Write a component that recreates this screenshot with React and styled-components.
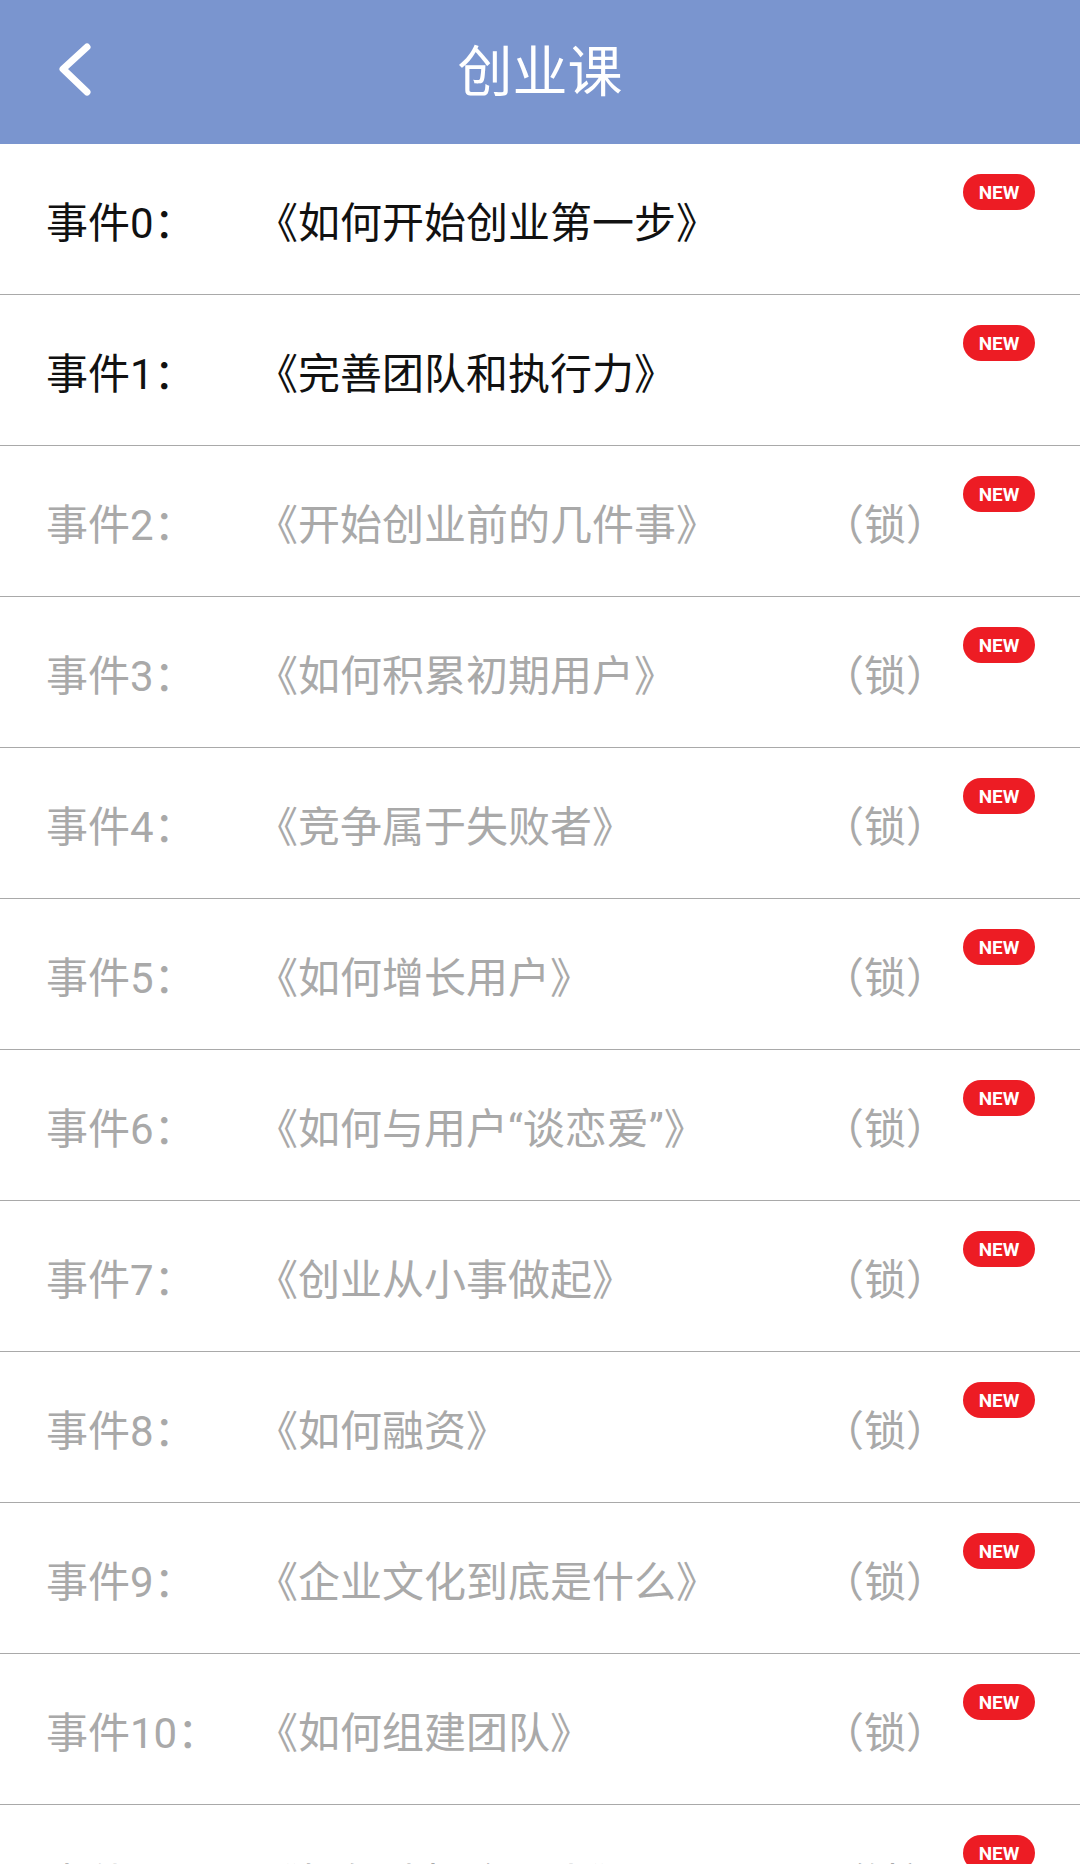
import React from 'react';
import styled, { createGlobalStyle } from 'styled-components';

const lessons = [
    { title: '《如何开始创业第一步》', locked: false },
    { title: '《完善团队和执行力》', locked: false },
    { title: '《开始创业前的几件事》', locked: true },
    { title: '《如何积累初期用户》', locked: true },
    { title: '《竞争属于失败者》', locked: true },
    { title: '《如何增长用户》', locked: true },
    { title: '《如何与用户“谈恋爱”》', locked: true },
    { title: '《创业从小事做起》', locked: true },
    { title: '《如何融资》', locked: true },
    { title: '《企业文化到底是什么》', locked: true },
    { title: '《如何组建团队》', locked: true },
    { title: '《如何选择合伙人》', locked: true },
];

function App() {
    return (
        <>
            <GlobalStyle />
            <Page>
                <Header>
                    <BackButton>
                        <svg width="36" height="58" viewBox="0 0 36 58">
                            <polyline
                                points="31,7 7,29 31,52"
                                fill="none"
                                stroke="#fff"
                                strokeWidth="7"
                                strokeLinecap="round"
                                strokeLinejoin="round"
                            />
                        </svg>
                    </BackButton>
                    <Title>创业课</Title>
                    <div />
                </Header>
                <List>
                    {lessons.map((lesson, i) => (
                        <Row key={i}>
                            <Label $locked={lesson.locked}>事件{i}：</Label>
                            <LessonTitle $locked={lesson.locked}>{lesson.title}</LessonTitle>
                            {lesson.locked && <Lock>（锁）</Lock>}
                            <Badge>NEW</Badge>
                        </Row>
                    ))}
                </List>
            </Page>
        </>
    );
}

const GlobalStyle = createGlobalStyle`
    body {
        margin: 0;
        background: #fff;
        font-family: Roboto, "Noto Sans CJK SC", sans-serif;
    }
`
const Page = styled.div`
    width: 1080px;
    height: 1864px;
    overflow: hidden;
    background: #fff;
`
const Header = styled.header`
    height: 144px;
    background-color: #7a95cf;
    display: grid;
    grid-template-columns: 1fr auto 1fr;
    align-items: center;
`
const BackButton = styled.div`
    padding-left: 56px;
    margin-bottom: 6px;
    display: flex;
    align-items: center;
`
const Title = styled.h1`
    margin: 0;
    color: #fff;
    font-size: 55px;
    font-weight: 400;
    line-height: 1;
`
const List = styled.ul`
    list-style: none;
    margin: 0;
    padding: 0;
`
const Row = styled.li`
    position: relative;
    height: 150px;
    border-bottom: 1px solid #a9a9a9;
    display: flex;
    align-items: center;
    padding-left: 46px;
    padding-right: 132px;
    font-size: 42px;
`
const Label = styled.span`
    width: 210px;
    flex-shrink: 0;
    color: ${props => props.$locked ? '#a9a9a9' : '#111'};
`
const LessonTitle = styled.span`
    flex: 1;
    white-space: nowrap;
    color: ${props => props.$locked ? '#a9a9a9' : '#111'};
`
const Lock = styled.span`
    color: #a9a9a9;
`
const Badge = styled.span`
    position: absolute;
    top: 30px;
    right: 45px;
    width: 72px;
    height: 36px;
    border-radius: 18px;
    background: #ed1c24;
    color: #fff;
    font-weight: 700;
    font-size: 19px;
    display: flex;
    align-items: center;
    justify-content: center;
`

export default App;
